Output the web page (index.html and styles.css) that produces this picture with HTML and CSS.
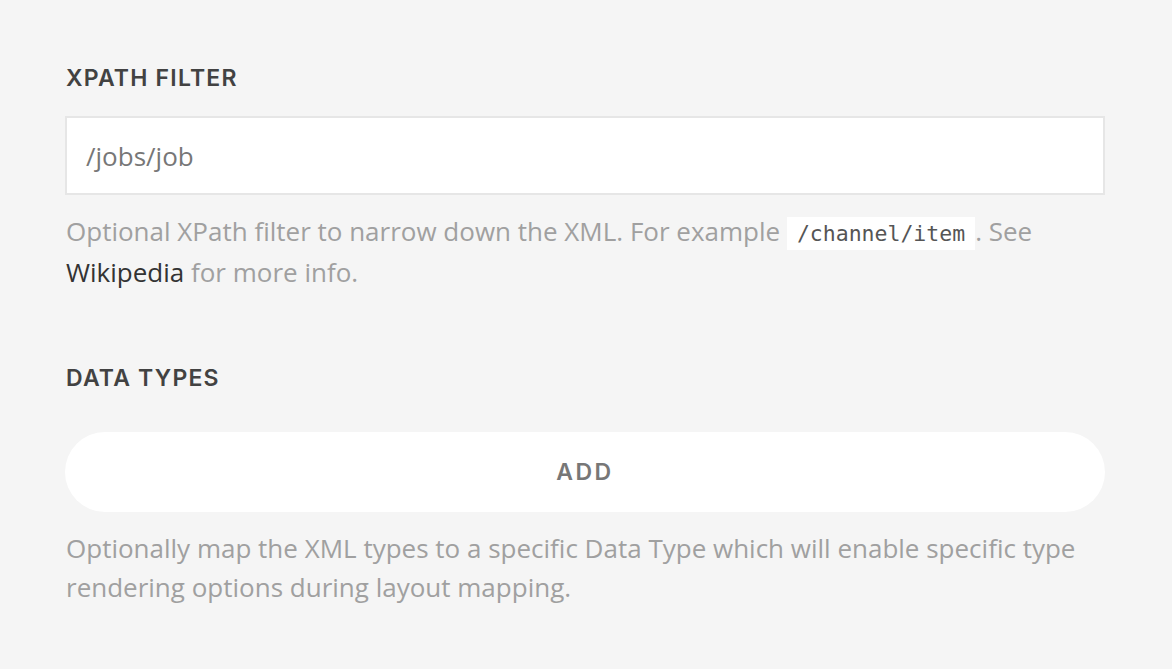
FILE: index.html
```html
<!DOCTYPE html>
<html>
<head>
<meta charset="utf-8">
<link rel="stylesheet" href="styles.css">
</head>
<body>
<div class="panel">
  <section class="field">
    <h2 class="label">XPATH FILTER</h2>
    <div class="input">/jobs/job</div>
    <p class="help">Optional XPath filter to narrow down the XML. For example <code>/channel/item</code>. See <a href="#">Wikipedia</a> for more info.</p>
  </section>
  <section class="field">
    <h2 class="label">DATA TYPES</h2>
    <button class="add">ADD</button>
    <p class="help">Optionally map the XML types to a specific Data Type which will enable specific type rendering options during layout mapping.</p>
  </section>
</div>
</body>
</html>
```
FILE: styles.css
```css
html, body {
  margin: 0;
  padding: 0;
  background: #f5f5f5;
}
.panel {
  padding: 62px 67px 0 65px;
  display: flex;
  flex-direction: column;
  gap: 70px;
}
.field {
  display: flex;
  flex-direction: column;
}
.label {
  margin: 0 0 0 1px;
  font-family: "Inter", sans-serif;
  font-weight: 600;
  font-size: 23px;
  line-height: 32px;
  color: #424242;
  letter-spacing: 1.2px;
}
.input {
  margin-top: 22px;
  box-sizing: border-box;
  height: 79px;
  border: 2px solid #e6e6e6;
  background: #fff;
  padding: 0 19px;
  display: flex;
  align-items: center;
  font-family: "Open Sans", sans-serif;
  font-size: 26px;
  color: #777;
}
.help {
  margin: 17px 0 0 1px;
  font-family: "Open Sans", sans-serif;
  font-size: 26px;
  line-height: 39px;
  color: #a0a0a0;
}
.help code {
  font-family: "DejaVu Sans Mono", monospace;
  font-size: 21.5px;
  color: #555;
  background: #fff;
  padding: 4px 10px;
  margin-left: 0;
}
.help a {
  color: #333;
  text-decoration: none;
}
.add {
  margin-top: 38px;
  height: 80px;
  border: none;
  border-radius: 40px;
  background: #fff;
  font-family: "Inter", sans-serif;
  font-weight: 600;
  font-size: 23px;
  color: #777;
  letter-spacing: 2.5px;
  cursor: pointer;
}
.add + .help {
  margin-top: 17px;
}
```
